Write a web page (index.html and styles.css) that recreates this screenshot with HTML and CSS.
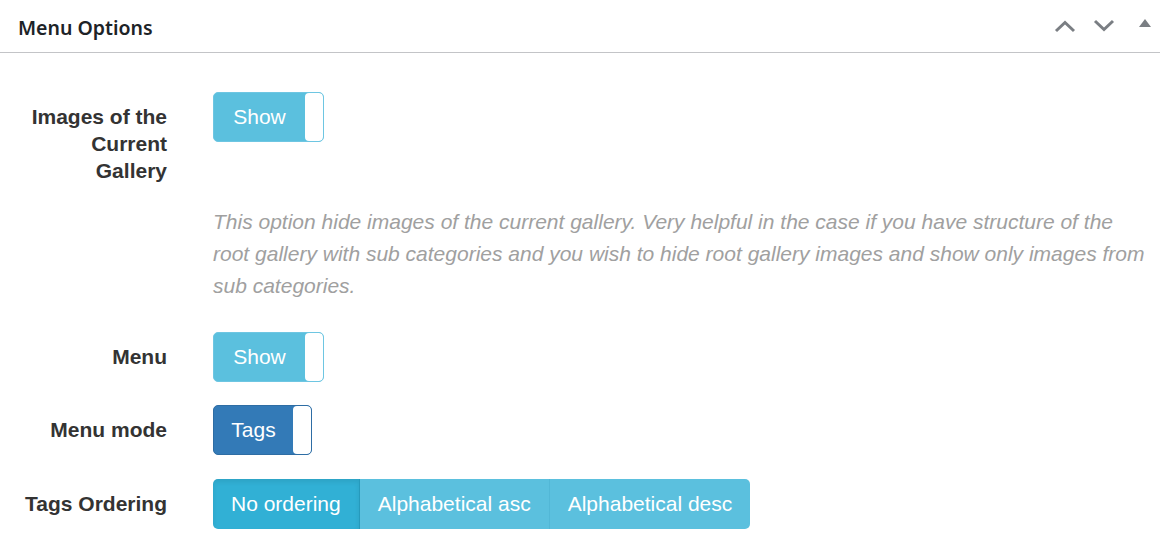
FILE: index.html
```html
<!DOCTYPE html>
<html>
<head>
<meta charset="utf-8">
<link rel="stylesheet" href="styles.css">
</head>
<body>
<div class="postbox">
  <div class="postbox-header">
    <h2 class="title">Menu Options</h2>
    <div class="actions">
      <svg class="icon up" width="22" height="14" viewBox="0 0 22 14"><path d="M2 12 L11 3.5 L20 12" fill="none" stroke="#7a7e83" stroke-width="3"/></svg>
      <svg class="icon down" width="22" height="14" viewBox="0 0 22 14"><path d="M2 2 L11 10.5 L20 2" fill="none" stroke="#7a7e83" stroke-width="3"/></svg>
      <svg class="icon tri" width="14" height="10" viewBox="0 0 14 10"><path d="M1 9 L7 1 L13 9 Z" fill="#7a7e83"/></svg>
    </div>
  </div>
  <div class="form">
    <div class="row">
      <div class="label">Images of the Current Gallery</div>
      <div class="control">
        <div class="toggle info w110"><span class="on">Show</span><span class="handle"></span></div>
      </div>
    </div>
    <p class="help">This option hide images of the current gallery. Very helpful in the case if you have structure of the root gallery with sub categories and you wish to hide root gallery images and show only images from sub categories.</p>
    <div class="row row-menu">
      <div class="label">Menu</div>
      <div class="control">
        <div class="toggle info w110"><span class="on">Show</span><span class="handle"></span></div>
      </div>
    </div>
    <div class="row row-mode">
      <div class="label">Menu mode</div>
      <div class="control">
        <div class="toggle primary w99"><span class="on">Tags</span><span class="handle"></span></div>
      </div>
    </div>
    <div class="row row-order">
      <div class="label">Tags Ordering</div>
      <div class="control">
        <div class="btn-group">
          <span class="btn active">No ordering</span>
          <span class="btn">Alphabetical asc</span>
          <span class="btn">Alphabetical desc</span>
        </div>
      </div>
    </div>
  </div>
</div>
</body>
</html>
```
FILE: styles.css
```css
html, body {
  margin: 0;
  padding: 0;
  background: #fff;
}
body {
  font-family: "Liberation Sans", Arial, sans-serif;
  color: #333;
}
.postbox-header {
  height: 52px;
  border-bottom: 1px solid #c3c4c7;
  display: flex;
  align-items: center;
  justify-content: space-between;
  padding-left: 18px;
  padding-right: 8px;
}
.title {
  margin: 0;
  font-family: "Noto Sans", "Open Sans", sans-serif;
  font-weight: 600;
  font-size: 19.5px;
  color: #1d2327;
  padding-top: 2px;
}
.actions {
  display: flex;
  align-items: center;
}
.icon {
  display: block;
}
.down {
  margin-left: 17px;
}
.tri {
  margin-left: 23px;
  margin-top: -6px;
}
.form {
  padding-top: 39px;
}
.row {
  display: flex;
  align-items: flex-start;
}
.label {
  width: 167px;
  box-sizing: border-box;
  padding-left: 22px;
  text-align: right;
  font-weight: bold;
  font-size: 21px;
  line-height: 27px;
  padding-top: 11px;
  color: #333;
}
.control {
  margin-left: 46px;
}
.toggle {
  height: 50px;
  box-sizing: border-box;
  border-radius: 5px;
  display: flex;
  overflow: hidden;
  border: 1px solid;
}
.toggle.info {
  background: #5bc0de;
  border-color: #6ec6e2;
}
.toggle.primary {
  background: #337ab7;
  border-color: #2e6da4;
}
.w110 { width: 111px; }
.w99 { width: 99px; }
.toggle .on {
  flex: 1;
  color: #fff;
  font-size: 21px;
  display: flex;
  align-items: center;
  justify-content: center;
}
.toggle .handle {
  width: 18px;
  background: #fff;
  border-radius: 4px;
}
.help {
  margin: 22px 0 0 213px;
  max-width: 936px;
  font-style: italic;
  font-size: 21px;
  line-height: 32px;
  color: #a0a0a0;
}
.row-menu { margin-top: 30px; }
.row-mode { margin-top: 23px; }
.row-order { margin-top: 24px; }
.btn-group {
  display: flex;
  height: 50px;
  border-radius: 5px;
  overflow: hidden;
}
.btn {
  display: flex;
  align-items: center;
  padding: 0 18px;
  background: #5bc0de;
  color: #fff;
  font-size: 21px;
  border-left: 1px solid #52b7d6;
}
.btn:first-child {
  border-left: none;
}
.btn.active {
  background: #31b0d5;
  box-shadow: inset 0 3px 5px rgba(0,0,0,0.08);
  border-right: 1px solid #269abc;
}
.btn.active + .btn {
  border-left: none;
}
```
